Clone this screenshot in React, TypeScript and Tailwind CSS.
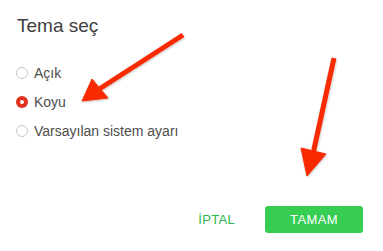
import React from "react";

function Radio({ checked }: { checked?: boolean }) {
  if (checked) {
    return (
      <span className="flex h-[12px] w-[12px] items-center justify-center rounded-full bg-[#e2321c]">
        <span className="h-[4px] w-[4px] rounded-full bg-white" />
      </span>
    );
  }
  return <span className="h-[12px] w-[12px] rounded-full border border-[#c8c8c8] bg-white" />;
}

export default function App() {
  const options = [
    { label: "Açık", checked: false },
    { label: "Koyu", checked: true },
    { label: "Varsayılan sistem ayarı", checked: false },
  ];
  return (
    <div
      className="relative flex h-[251px] w-[383px] flex-col bg-white"
      style={{ fontFamily: '"Liberation Sans", Arial, sans-serif' }}
    >
      <div className="pl-[17px] pt-[14px] text-[19px] leading-[24px] text-[#404040]">Tema seç</div>
      <div className="mt-[25px] flex flex-col gap-[9px] pl-[16px]">
        {options.map((o) => (
          <div key={o.label} className="flex h-[20px] items-center gap-[6px] text-[14px] leading-[20px] text-[#4d4d4d]">
            <Radio checked={o.checked} />
            <span>{o.label}</span>
          </div>
        ))}
      </div>
      <div className="mt-auto flex items-center justify-end gap-[30px] pb-[18px] pr-[20px]">
        <span className="text-[13px] tracking-[0.3px] text-[#2eb84c]">İPTAL</span>
        <div className="flex h-[27px] w-[98px] items-center justify-center rounded-[3px] bg-[#37cd53] text-[13px] tracking-[0.4px] text-white">
          TAMAM
        </div>
      </div>
      <svg className="pointer-events-none absolute left-0 top-0" width="383" height="251" viewBox="0 0 383 251">
        <defs>
          <filter id="sh" x="-20%" y="-20%" width="140%" height="140%">
            <feDropShadow dx="0.5" dy="1" stdDeviation="1" floodColor="#000" floodOpacity="0.25" />
          </filter>
        </defs>
        <g filter="url(#sh)" fill="#fa2a05" stroke="#fa2a05">
          <line x1="183" y1="35" x2="100" y2="88.5" strokeWidth="5" />
          <polygon points="92,79 108,98 82,101" strokeWidth="1" strokeLinejoin="round" />
          <line x1="334" y1="58" x2="313.5" y2="151.5" strokeWidth="5" />
          <polygon points="301,148 326,154 307,176" strokeWidth="1" strokeLinejoin="round" />
        </g>
      </svg>
    </div>
  );
}
